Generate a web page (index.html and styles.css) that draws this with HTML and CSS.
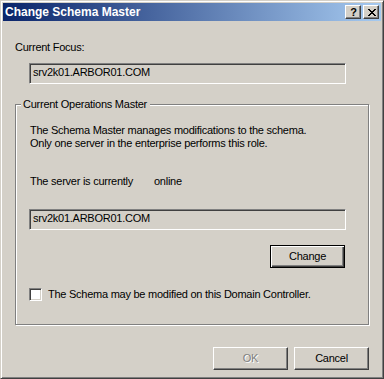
FILE: index.html
```html
<!DOCTYPE html>
<html>
<head>
<meta charset="utf-8">
<title>Change Schema Master</title>
<link rel="stylesheet" href="styles.css">
</head>
<body>
<div class="window">
  <div class="titlebar">
    <span class="title">Change Schema Master</span>
    <div class="caption-buttons">
      <div class="cap-btn help">?</div>
      <div class="cap-btn close">
        <svg width="8" height="7" viewBox="0 0 8 7" shape-rendering="crispEdges">
          <path d="M0 0h2v1h-2z M6 0h2v1h-2z M1 1h2v1h-2z M5 1h2v1h-2z M2 2h4v1h-4z M3 3h2v1h-2z M2 4h4v1h-4z M1 5h2v1h-2z M5 5h2v1h-2z M0 6h2v1h-2z M6 6h2v1h-2z" fill="#000"/>
        </svg>
      </div>
    </div>
  </div>
  <div class="content">
    <div class="label">Current Focus:</div>
    <div class="textbox first">srv2k01.ARBOR01.COM</div>
    <div class="group">
      <div class="group-label">Current Operations Master</div>
      <div class="para">
        <div class="line">The Schema Master manages modifications to the schema.</div>
        <div class="line">Only one server in the enterprise performs this role.</div>
      </div>
      <div class="status-row">
        <span class="status-label">The server is currently</span>
        <span class="status-value">online</span>
      </div>
      <div class="textbox second">srv2k01.ARBOR01.COM</div>
      <div class="change-row">
        <div class="button default">Change</div>
      </div>
      <div class="check-row">
        <div class="checkbox"></div>
        <span class="check-label">The Schema may be modified on this Domain Controller.</span>
      </div>
    </div>
    <div class="footer">
      <div class="button disabled">OK</div>
      <div class="button">Cancel</div>
    </div>
  </div>
</div>
</body>
</html>
```
FILE: styles.css
```css
* { box-sizing: border-box; }
html, body {
  margin: 0;
  padding: 0;
  background: #d4d0c8;
}
body {
  font-family: "Liberation Sans", Arial, sans-serif;
  font-size: 11px;
  line-height: 13px;
  letter-spacing: -0.25px;
  color: #000;
}
.window {
  width: 384px;
  height: 379px;
  border: 1px solid;
  border-color: #d4d0c8 #404040 #404040 #d4d0c8;
  box-shadow: inset 1px 1px 0 #fff, inset -1px -1px 0 #808080;
  padding: 2px;
  display: flex;
  flex-direction: column;
  background: #d4d0c8;
}
.titlebar {
  height: 18px;
  flex: none;
  display: flex;
  align-items: center;
  justify-content: space-between;
  padding-left: 2px;
  padding-right: 2px;
  background: linear-gradient(to right, #0a246a 0%, #a6caf0 100%);
}
.title {
  color: #fff;
  font-weight: bold;
  font-size: 12px;
  letter-spacing: 0;
  line-height: 18px;
}
.caption-buttons {
  display: flex;
  gap: 2px;
}
.cap-btn {
  width: 16px;
  height: 14px;
  background: #d4d0c8;
  border: 1px solid;
  border-color: #fff #404040 #404040 #fff;
  box-shadow: inset -1px -1px 0 #808080;
  display: flex;
  align-items: center;
  justify-content: center;
}
.cap-btn.help {
  font-weight: bold;
  font-size: 11px;
  letter-spacing: 0;
  line-height: 12px;
  padding-bottom: 1px;
  padding-left: 1px;
}
.cap-btn.close svg {
  display: block;
  margin-left: 1px;
  margin-top: 1px;
}
.content {
  flex: 1;
  padding: 20px 11px 0 12px;
  display: flex;
  flex-direction: column;
}
.label {
  height: 13px;
}
.textbox {
  width: 317px;
  height: 21px;
  margin-left: 14px;
  border: 1px solid;
  border-color: #808080 #fff #fff #808080;
  box-shadow: inset 1px 1px 0 #404040, inset -1px -1px 0 #d4d0c8;
  padding: 2px 3px;
  white-space: nowrap;
}
.textbox.first {
  margin-top: 9px;
}
.group {
  position: relative;
  margin-top: 20px;
  width: 354px;
  height: 221px;
  border: 1px solid #808080;
  box-shadow: inset 1px 1px 0 #fff, 1px 1px 0 #fff;
  padding: 19px 0 0 13px;
  display: flex;
  flex-direction: column;
}
.group-label {
  position: absolute;
  top: -7px;
  left: 5px;
  padding: 0 3px 0 2px;
  background: #d4d0c8;
  white-space: nowrap;
}
.para {
  padding-left: 1px;
}
.line {
  white-space: nowrap;
}
.status-row {
  margin-top: 25px;
  padding-left: 1px;
  display: flex;
}
.status-label {
  width: 124px;
  white-space: nowrap;
}
.group .textbox.second {
  margin-left: 0;
  margin-top: 21px;
}
.change-row {
  width: 317px;
  margin-top: 15px;
  display: flex;
  justify-content: flex-end;
  padding-right: 1px;
}
.button {
  width: 75px;
  height: 23px;
  border: 1px solid;
  border-color: #fff #404040 #404040 #fff;
  box-shadow: inset -1px -1px 0 #808080;
  display: flex;
  align-items: center;
  justify-content: center;
  background: #d4d0c8;
}
.button.default {
  border: 1px solid #000;
  box-shadow: inset 1px 1px 0 #fff, inset -1px -1px 0 #404040, inset -2px -2px 0 #808080;
}
.button.disabled {
  color: #808080;
  text-shadow: 1px 1px 0 #fff;
}
.check-row {
  margin-top: 20px;
  display: flex;
  align-items: center;
  height: 13px;
}
.checkbox {
  width: 13px;
  height: 13px;
  flex: none;
  background: #fff;
  border: 1px solid;
  border-color: #808080 #fff #fff #808080;
  box-shadow: inset 1px 1px 0 #404040, inset -1px -1px 0 #d4d0c8;
}
.check-label {
  margin-left: 6px;
  white-space: nowrap;
}
.footer {
  margin-top: 22px;
  display: flex;
  justify-content: flex-end;
  gap: 6px;
  padding-right: 1px;
}
```
